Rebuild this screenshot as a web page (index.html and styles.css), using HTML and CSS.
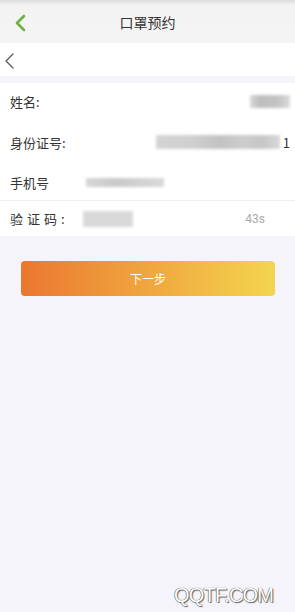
FILE: index.html
```html
<!DOCTYPE html>
<html lang="zh">
<head>
<meta charset="utf-8">
<title>口罩预约</title>
<link rel="stylesheet" href="styles.css">
</head>
<body>
<div class="page">
  <header class="topbar">
    <svg class="back-green" width="12" height="18" viewBox="0 0 12 18"><path d="M10 2 L3 9 L10 16" fill="none" stroke="#6cb33f" stroke-width="2.6" stroke-linecap="round" stroke-linejoin="round"/></svg>
    <h1 class="title">口罩预约</h1>
  </header>
  <div class="subbar">
    <svg class="back-thin" width="11" height="16" viewBox="0 0 11 16"><path d="M9 1 L2 8 L9 15" fill="none" stroke="#555" stroke-width="1.2" stroke-linecap="round" stroke-linejoin="round"/></svg>
  </div>
  <section class="form">
    <div class="row r1">
      <span class="label">姓名:</span>
      <span class="blur b-name"></span>
    </div>
    <div class="row r2">
      <span class="label">身份证号:</span>
      <span class="idval"><span class="blur b-id"></span><span class="one">1</span></span>
    </div>
    <div class="row r3">
      <span class="label">手机号</span>
      <span class="blur b-phone"></span>
    </div>
    <div class="row r4">
      <span class="label spaced">验证码:</span>
      <span class="blur b-code"></span>
      <span class="timer">43s</span>
    </div>
  </section>
  <div class="actions">
    <button class="next">下一步</button>
  </div>
  <div class="watermark">QQTF.COM</div>
</div>
</body>
</html>
```
FILE: styles.css
```css
html, body {
  margin: 0;
  padding: 0;
  background: #f5f4fb;
  font-family: "Noto Sans CJK SC", "Noto Sans", sans-serif;
}
.page {
  position: relative;
  width: 295px;
  height: 612px;
  overflow: hidden;
  background: #f5f4fb;
}
.topbar {
  height: 43px;
  background: linear-gradient(#dcdcdc 0, #f3f3f3 5px, #f4f4f4 100%);
  display: flex;
  align-items: center;
  position: relative;
}
.back-green {
  margin-left: 14px;
  margin-top: 2px;
}
.title {
  position: absolute;
  left: 0;
  right: 0;
  top: 12px;
  margin: 0;
  text-align: center;
  font-size: 14px;
  font-weight: normal;
  color: #333;
  line-height: 20px;
}
.subbar {
  height: 33px;
  background: #fff;
  display: flex;
  align-items: center;
}
.back-thin {
  margin-left: 4px;
  margin-top: 2px;
}
.form {
  margin-top: 7px;
  background: #fff;
}
.row {
  display: flex;
  align-items: center;
  padding: 0 10px;
  font-size: 13px;
  color: #333;
  position: relative;
}
.r1 { height: 37px; }
.r2 { height: 44px; }
.r3 { height: 36px; border-bottom: 1px solid #efeff3; }
.r4 { height: 35px; }
.label { flex: none; }
.spaced { letter-spacing: 4px; }
.blur {
  display: inline-block;
  background: #cfcfcf;
  filter: blur(1.5px);
}
.b-name {
  margin-left: auto;
  margin-right: -5px;
  width: 40px;
  height: 13px;
  background: linear-gradient(90deg, #d8d8d8 0, #bdbdbd 25%, #c4c4c4 70%, #dadada 100%);
}
.idval {
  margin-left: auto;
  margin-right: -5px;
  display: flex;
  align-items: center;
}
.b-id {
  width: 124px;
  height: 14px;
  background: linear-gradient(90deg, #d4d4d4 0, #cfcfcf 30%, #c2c2c2 52%, #cdcdcd 70%, #c6c6c6 85%, #d8d8d8 100%);
}
.one {
  margin-left: 3px;
  font-size: 13px;
  color: #333;
}
.b-phone {
  margin-left: 37px;
  width: 78px;
  height: 9px;
  background: linear-gradient(90deg, #d6d6d6 0, #c8c8c8 40%, #d2d2d2 70%, #d9d9d9 100%);
}
.b-code {
  margin-left: 14px;
  width: 50px;
  height: 16px;
  background: #d9d9d9;
}
.timer {
  margin-left: auto;
  margin-right: 20px;
  color: #aaa;
  font-family: "Roboto", "Liberation Sans", sans-serif;
  font-size: 12px;
}
.actions {
  padding: 25px 20px 0 21px;
}
.next {
  display: block;
  width: 254px;
  height: 35px;
  border: none;
  border-radius: 4px;
  background: linear-gradient(90deg, #ea7730 0%, #efa23c 45%, #f4d54f 100%);
  color: #fff;
  font-family: "Noto Sans CJK SC", sans-serif;
  font-size: 12px;
  padding: 0;
}
.watermark {
  position: absolute;
  left: 174px;
  top: 584px;
  font-family: "Liberation Sans", sans-serif;
  font-size: 20px;
  color: #fff;
  text-shadow: 0 0 1px #444, 1px 1px 1px #666, -0.5px -0.5px 0.5px #888;
  letter-spacing: -0.8px;
}
```
